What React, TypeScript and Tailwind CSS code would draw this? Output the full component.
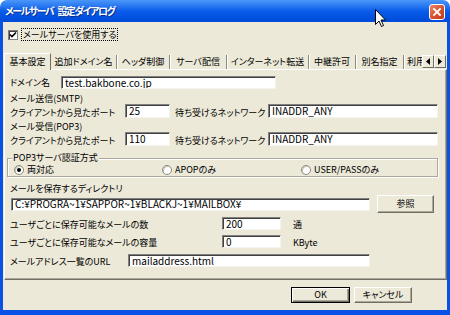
const Edit = ({ className, value }: { className: string; value?: string }) => (
  <div
    className={`${className} bg-white border border-t-[#808080] border-l-[#808080] border-r-[#F4F3EE] border-b-[#F4F3EE] shadow-[inset_1px_1px_0_#404040] pl-[3px] flex items-center text-[10px] leading-[10px] whitespace-nowrap overflow-hidden`}
  >
    {value}
  </div>
);

const Radio = ({ checked, label, className }: { checked?: boolean; label: string; className: string }) => (
  <div className={`${className} flex items-center`}>
    <div className="w-[10px] h-[10px] rounded-full bg-white border border-[#8C8A7E] shadow-[inset_1px_1px_0_#C9C7BA] flex items-center justify-center">
      {checked && <div className="w-[4px] h-[4px] rounded-full bg-black" />}
    </div>
    <span className="ml-[3px] leading-[10px] whitespace-nowrap">{label}</span>
  </div>
);

const tabs = [
  { label: "追加ドメイン名", w: "w-[66px]" },
  { label: "ヘッダ制御", w: "w-[53px]" },
  { label: "サーバ配信", w: "w-[57px]" },
  { label: "インターネット転送", w: "w-[82px]" },
  { label: "中継許可", w: "w-[47px]" },
  { label: "別名指定", w: "w-[48px]" },
];

export default function App() {
  return (
    <div className='relative w-[450px] h-[315px] flex flex-col overflow-hidden bg-white text-black text-[9px] leading-[12px] font-["Noto_Sans_CJK_JP",sans-serif] [font-feature-settings:"palt"_1]'>
      {/* title bar */}
      <div className="relative h-[22px] shrink-0 rounded-t-[7px] bg-gradient-to-b from-[#4A96F8] via-[#0A5CEB] to-[#0049D8] flex items-center gap-[4px] pl-[5px] text-white font-bold text-[10px] tracking-[-1.5px] leading-none whitespace-nowrap [text-shadow:1px_1px_0_#0A2F8F]">
        <span>メールサーバ</span>
        <span>設定ダイアログ</span>
        <div className="absolute right-[5px] top-[4px] w-[16px] h-[16px] rounded-[3px] border border-white bg-gradient-to-br from-[#E9876A] via-[#D9532F] to-[#C23A17] flex items-center justify-center">
          <svg width="10" height="10" viewBox="0 0 10 10">
            <path d="M2 2L8 8M8 2L2 8" stroke="white" strokeWidth="1.8" strokeLinecap="square" />
          </svg>
        </div>
      </div>

      {/* body */}
      <div className="flex-1 flex flex-col bg-[#ECE9D8] border-x-[3px] border-b-[5px] border-[#0A52E6] pl-[1px]">
        {/* enable checkbox */}
        <div className="mt-[6px] h-[13px] flex items-center">
          <div className="ml-[4px] w-[10px] h-[10px] bg-white border border-[#808080] shadow-[inset_1px_1px_0_#404040] flex items-center justify-center">
            <svg width="8" height="8" viewBox="0 0 8 8">
              <path d="M1 3.5L3 5.5L7 1.5" stroke="black" strokeWidth="1.6" fill="none" />
            </svg>
          </div>
          <div className="ml-[3px] h-[13px] px-[1px] border border-dotted border-black flex items-center leading-[10px] whitespace-nowrap">
            メールサーバを使用する
          </div>
        </div>

        {/* tab strip */}
        <div className="mt-[12px] h-[16px] flex items-end">
          <div className="relative z-10 mb-[-1px] w-[47px] h-[17px] bg-[#ECE9D8] border-t border-l border-white border-r border-r-[#716F64] pt-[2px] text-center whitespace-nowrap">
            基本設定
          </div>
          {tabs.map((t) => (
            <div
              key={t.label}
              className={`${t.w} h-[14px] flex items-center justify-center border-r border-[#8C8A7E] shadow-[1px_0_0_#fff] whitespace-nowrap`}
            >
              {t.label}
            </div>
          ))}
          <div className="w-[18px] h-[14px] pl-[3px] overflow-hidden whitespace-nowrap flex items-center">利用</div>
          <div className="mb-[1px] flex">
            {["M5 1L1 4.5L5 8Z", "M1 1L5 4.5L1 8Z"].map((d) => (
              <div
                key={d}
                className="w-[12px] h-[13px] bg-[#ECE9D8] border border-t-white border-l-white border-r-[#716F64] border-b-[#716F64] flex items-center justify-center"
              >
                <svg width="6" height="9" viewBox="0 0 6 9">
                  <path d={d} fill="black" />
                </svg>
              </div>
            ))}
          </div>
        </div>

        {/* panel */}
        <div className="h-[211px] border-t border-l border-white border-r border-b border-r-[#716F64] border-b-[#716F64] shadow-[inset_-1px_-1px_0_#ACA899]">
          <div className="pl-[5px] flex flex-col whitespace-nowrap">
            <div className="mt-[6px] h-[13px] flex items-center">
              <span className="w-[51px] leading-[10px]">ドメイン名</span>
              <Edit className="w-[215px] h-[13px]" value="test.bakbone.co.jp" />
            </div>

            <div className="h-[15px] pt-[5px] leading-[10px]">メール送信(SMTP)</div>
            <div className="h-[14px] flex items-end">
              <span className="w-[115px] leading-[10px]">クライアントから見たポート</span>
              <Edit className="w-[45px] h-[14px]" value="25" />
              <span className="ml-[5px] w-[93px] leading-[10px]">待ち受けるネットワーク</span>
              <Edit className="w-[170px] h-[14px]" value="INADDR_ANY" />
            </div>

            <div className="h-[14px] pt-[4px] leading-[10px]">メール受信(POP3)</div>
            <div className="h-[14px] flex items-end">
              <span className="w-[115px] leading-[10px]">クライアントから見たポート</span>
              <Edit className="w-[45px] h-[14px]" value="110" />
              <span className="ml-[5px] w-[93px] leading-[10px]">待ち受けるネットワーク</span>
              <Edit className="w-[170px] h-[14px]" value="INADDR_ANY" />
            </div>

            {/* auth group box */}
            <div className="relative mt-[12px] ml-[-3px] w-[431px] h-[19px] border border-[#ACA899] shadow-[1px_1px_0_#fff,inset_1px_1px_0_#fff]">
              <span className="absolute left-[4px] top-[-6px] px-[1px] bg-[#ECE9D8] leading-[10px]">
                POP3サーバ認証方式
              </span>
              <div className="mt-[6px] ml-[6px] flex">
                <Radio className="w-[148px]" checked label="両対応" />
                <Radio className="w-[139px]" label="APOPのみ" />
                <Radio className="w-[120px]" label="USER/PASSのみ" />
              </div>
            </div>

            <div className="h-[18px] pt-[7px] leading-[10px]">メールを保存するディレクトリ</div>
            <div className="h-[18px] flex items-center">
              <Edit className="ml-[1px] w-[359px] h-[13px]" value="C:¥PROGRA~1¥SAPPOR~1¥BLACKJ~1¥MAILBOX¥" />
              <div className="ml-[7px] w-[57px] h-[18px] bg-[#ECE9D8] border border-t-white border-l-white border-r-[#716F64] border-b-[#716F64] shadow-[inset_-1px_-1px_0_#ACA899] flex items-center justify-center">
                参照
              </div>
            </div>

            <div className="mt-[4px] h-[13px] flex items-end">
              <span className="w-[212px] leading-[10px]">ユーザごとに保存可能なメールの数</span>
              <Edit className="w-[59px] h-[13px]" value="200" />
              <span className="ml-[12px] leading-[10px]">通</span>
            </div>
            <div className="mt-[5px] h-[13px] flex items-end">
              <span className="w-[212px] leading-[10px]">ユーザごとに保存可能なメールの容量</span>
              <Edit className="w-[59px] h-[13px]" value="0" />
              <span className="ml-[12px] leading-[10px]">KByte</span>
            </div>
            <div className="mt-[6px] h-[13px] flex items-end">
              <span className="w-[118px] leading-[10px]">メールアドレス一覧のURL</span>
              <Edit className="w-[242px] h-[13px]" value="mailaddress.html" />
            </div>
          </div>
        </div>

        {/* buttons */}
        <div className="mt-[7px] pr-[35px] flex justify-end gap-[4px]">
          <div className="w-[59px] h-[16px] border border-black bg-[#ECE9D8] shadow-[inset_1px_1px_0_#fff,inset_-1px_-1px_0_#716F64,inset_-2px_-2px_0_#ACA899] flex items-center justify-center leading-[10px]">
            OK
          </div>
          <div className="w-[58px] h-[16px] bg-[#ECE9D8] border border-t-white border-l-white border-r-[#716F64] border-b-[#716F64] shadow-[inset_-1px_-1px_0_#ACA899] flex items-center justify-center leading-[10px] whitespace-nowrap">
            キャンセル
          </div>
        </div>
      </div>

      {/* mouse pointer */}
      <svg className="absolute left-[375px] top-[9px]" width="12" height="19" viewBox="0 0 12 19">
        <path d="M0.5 0.5V15.5L4 12L6.5 17.5L8.5 16.5L6 11H10.5Z" fill="white" stroke="black" strokeWidth="1" />
      </svg>
    </div>
  );
}
